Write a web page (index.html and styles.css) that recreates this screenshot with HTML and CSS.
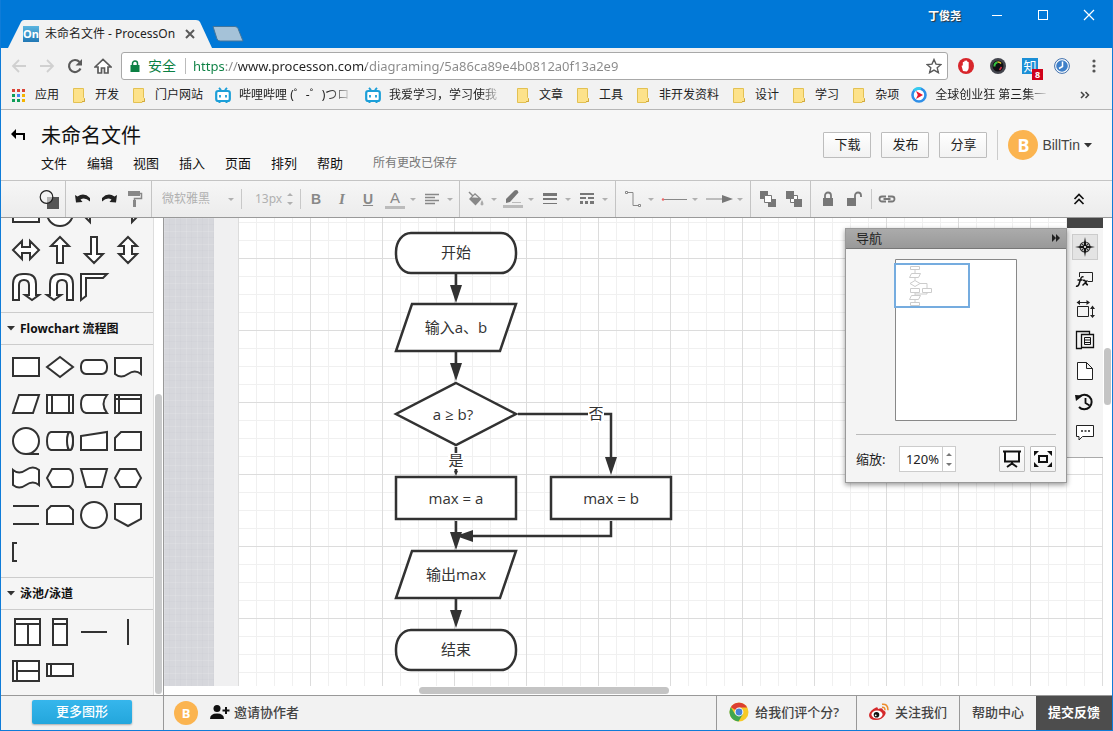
FILE: index.html
```html
<!DOCTYPE html>
<html lang="zh-CN">
<head>
<meta charset="utf-8">
<title>未命名文件 - ProcessOn</title>
<link rel="stylesheet" href="styles.css">
</head>
<body>
<svg class="defs" aria-hidden="true">
  <symbol id="folder" viewBox="0 0 16 16"><path d="M2.500 1.500h10v9l1 1v3h-1.500l-1 1h-8.500z" fill="#fde28a" stroke="#e3c152"/><path d="M13.500 11.500v3h-2.500" fill="none" stroke="#d0a93c"/></symbol>
  <symbol id="bili" viewBox="0 0 16 16"><rect x="1.200" y="4" width="13.600" height="10" rx="2" fill="#fff" stroke="#1c9fd8" stroke-width="2.200"/><path d="M4 0.800l2 2.400M12 0.800l-2 2.400M5 8v2.600M11 8v2.600M3.500 15.500h2M10.500 15.500h2" stroke="#1c9fd8" stroke-width="1.800"/></symbol>
  <symbol id="caret" viewBox="0 0 8 8"><path d="M1 3h6l-3 3z" fill="#b0b0b0"/></symbol>
</svg>

<header class="titlebar">
  <div class="tab">
    <svg class="tab-shape" viewBox="0 0 204 28" preserveAspectRatio="none"><path d="M0 28 L13 2 Q14 0 16 0 H188 Q191 0 192 2 L204 28z" fill="#f2f2f2"/></svg>
    <span class="favicon">On</span>
    <span class="tab-title">未命名文件 - ProcessOn</span>
    <button class="plain tab-close" aria-label="关闭标签页"><svg width="10" height="10" viewBox="0 0 10 10"><path d="M1 1l8 8M9 1l-8 8" stroke="#5a5a5a" stroke-width="2"/></svg></button>
  </div>
  <button class="plain new-tab" aria-label="新标签页"><svg width="34" height="18" viewBox="0 0 34 18"><path d="M2 1.500h22q2 0 3 2l5 12.500h-23q-2 0-3-2z" fill="#a5c2d8" stroke="#42759c"/></svg></button>
  <span class="spacer"></span>
  <span class="profile">丁俊尧</span>
  <button class="plain win" aria-label="最小化"><svg width="12" height="12" viewBox="0 0 12 12"><path d="M1 6.500h10" stroke="#fff"/></svg></button>
  <button class="plain win" aria-label="最大化"><svg width="12" height="12" viewBox="0 0 12 12"><rect x="1.500" y="1.500" width="9" height="9" fill="none" stroke="#fff"/></svg></button>
  <button class="plain win" aria-label="关闭"><svg width="12" height="12" viewBox="0 0 12 12"><path d="M1 1l10 10M11 1l-10 10" stroke="#fff" stroke-width="1.200"/></svg></button>
</header>

<div class="navrow">
  <button class="plain nav" aria-label="后退"><svg width="16" height="16" viewBox="0 0 16 16"><path d="M15 8H2M8 2L2 8l6 6" fill="none" stroke="#d0d0d0" stroke-width="1.800"/></svg></button>
  <button class="plain nav" aria-label="前进"><svg width="16" height="16" viewBox="0 0 16 16"><path d="M1 8h13M8 2l6 6-6 6" fill="none" stroke="#d0d0d0" stroke-width="1.800"/></svg></button>
  <button class="plain nav" aria-label="重新加载"><svg width="16" height="16" viewBox="0 0 16 16"><path d="M13.500 10.500a6 6 0 1 1-1-6.500" fill="none" stroke="#5a5a5a" stroke-width="2.200"/><path d="M15 1v6.500H8.500z" fill="#5a5a5a"/></svg></button>
  <button class="plain nav" aria-label="主页"><svg width="18" height="16" viewBox="0 0 18 16"><path d="M1 9L9 1.500 17 9h-3v6h-3.500v-5h-3v5H4V9z" fill="#fff" stroke="#5a5a5a" stroke-width="1.700"/></svg></button>
  <div class="omnibox">
    <svg width="10" height="12" viewBox="0 0 10 12"><rect x="0.500" y="5" width="9" height="7" fill="#0b8043"/><path d="M2.500 5V3.500a2.500 2.500 0 0 1 5 0V5" fill="none" stroke="#0b8043" stroke-width="1.500"/></svg>
    <span class="secure">安全</span>
    <input class="url" type="text" aria-label="地址" value="https://www.processon.com/diagraming/5a86ca89e4b0812a0f13a2e9">
    <button class="plain" aria-label="收藏"><svg width="16" height="16" viewBox="0 0 16 16"><path d="M8 1.500l2 4.600 5 .4-3.800 3.300 1.200 4.900L8 12.100l-4.400 2.600 1.200-4.900L1 6.500l5-.4z" fill="none" stroke="#5a5a5a" stroke-width="1.400"/></svg></button>
  </div>
  <button class="plain ext" aria-label="广告拦截"><svg width="16" height="16" viewBox="0 0 16 16"><circle cx="8" cy="8" r="8" fill="#d8262b"/><path d="M5 13L3.600 8q0-1 1.200-.4V4.200q1-.8 1.500 0V3q.9-.9 1.500 0v-.2q.9-.7 1.500.2v1q1-.5 1.400.3V10q-.3 2.600-2 3.600z" fill="#fff"/></svg></button>
  <button class="plain ext" aria-label="相机"><svg width="16" height="16" viewBox="0 0 16 16"><circle cx="8" cy="8" r="8" fill="#43454d"/><circle cx="8" cy="8" r="5.500" fill="#101014"/><path d="M4.500 8.500a4 4 0 0 1 3-4.300" fill="none" stroke="#35c440" stroke-width="2"/><path d="M7.500 4a4 4 0 0 1 3.500 1.500" fill="none" stroke="#d8c030" stroke-width="1.600"/><path d="M11.500 9l-2 3" stroke="#d42a45" stroke-width="1.500"/></svg></button>
  <button class="plain ext" aria-label="知乎"><span class="zhi">知</span><span class="count">8</span></button>
  <button class="plain ext" aria-label="历史"><svg width="16" height="16" viewBox="0 0 16 16"><circle cx="8" cy="8" r="7.400" fill="#fff" stroke="#3c6dab"/><circle cx="8" cy="8" r="5.800" fill="#3f80c9"/><path d="M8.500 3.500v5l-3.500 2" fill="none" stroke="#fff" stroke-width="1.500"/></svg></button>
  <button class="plain ext" aria-label="菜单"><svg width="4" height="14" viewBox="0 0 4 14"><circle cx="2" cy="2" r="1.600" fill="#555"/><circle cx="2" cy="7" r="1.600" fill="#555"/><circle cx="2" cy="12" r="1.600" fill="#555"/></svg></button>
</div>

<nav class="bookmarks">
  <a href="#"><svg width="16" height="16" viewBox="0 0 16 16"><path d="M1 2h3v3H1zM6 2h3v3H6zM11 2h3v3h-3z" fill="#db4437"/><path d="M1 7h3v3H1z" fill="#0f9d58"/><path d="M6 7h3v3H6z" fill="#4285f4"/><path d="M11 7h3v3h-3zM11 12h3v3h-3z" fill="#f4b400"/><path d="M1 12h3v3H1zM6 12h3v3H6z" fill="#0f9d58"/></svg>应用</a>
  <a href="#"><svg width="16" height="16"><use href="#folder"/></svg>开发</a>
  <a href="#"><svg width="16" height="16"><use href="#folder"/></svg>门户网站</a>
  <a href="#"><svg width="16" height="16"><use href="#bili"/></svg><span class="fade">哔哩哔哩 (゜-゜)つロ</span></a>
  <a href="#"><svg width="16" height="16"><use href="#bili"/></svg><span class="fade">我爱学习，学习使我</span></a>
  <a href="#"><svg width="16" height="16"><use href="#folder"/></svg>文章</a>
  <a href="#"><svg width="16" height="16"><use href="#folder"/></svg>工具</a>
  <a href="#"><svg width="16" height="16"><use href="#folder"/></svg>非开发资料</a>
  <a href="#"><svg width="16" height="16"><use href="#folder"/></svg>设计</a>
  <a href="#"><svg width="16" height="16"><use href="#folder"/></svg>学习</a>
  <a href="#"><svg width="16" height="16"><use href="#folder"/></svg>杂项</a>
  <a href="#"><svg width="16" height="16" viewBox="0 0 16 16"><circle cx="8" cy="8" r="6.500" fill="#fff" stroke="#2f8fe8" stroke-width="2.600"/><path d="M3 3.500a6.500 6.500 0 0 1 7-1.700" fill="none" stroke="#35cdf0" stroke-width="2.600"/><path d="M5 4l7 4-7 4 1.800-4z" fill="#e8162c"/></svg><span class="fade">全球创业狂 第三集一</span></a>
  <span class="spacer"></span>
  <button class="plain more" aria-label="更多书签"><svg width="10" height="8" viewBox="0 0 10 8"><path d="M1 1l3 3-3 3M5.500 1l3 3-3 3" fill="none" stroke="#444" stroke-width="1.500"/></svg></button>
</nav>

<div class="apphead">
  <button class="plain back" aria-label="返回"><svg width="16" height="12" viewBox="0 0 16 12"><path d="M1 5l5-5v4h9v7h-2V6H6v4z" fill="#000"/></svg></button>
  <div class="head-main">
    <h1>未命名文件</h1>
    <div class="menus">
      <button class="plain">文件</button><button class="plain">编辑</button><button class="plain">视图</button><button class="plain">插入</button><button class="plain">页面</button><button class="plain">排列</button><button class="plain">帮助</button>
      <span class="saved">所有更改已保存</span>
    </div>
  </div>
  <div class="actions">
    <button class="btn">下载</button><button class="btn">发布</button><button class="btn">分享</button>
    <span class="rule"></span>
    <button class="plain user"><span class="avatar">B</span>BillTin<svg width="8" height="5" viewBox="0 0 8 5"><path d="M0 0h8L4 4.500z" fill="#333"/></svg></button>
  </div>
</div>

<div class="toolbar" role="toolbar">
  <div class="group shapes"><button class="plain tool" aria-label="图形"><svg width="20" height="20" viewBox="0 0 20 20"><path d="M8 8h12v12H8z" fill="#555"/><circle cx="7.500" cy="8" r="6.300" fill="#f4f4f4" fill-opacity=".6" stroke="#222" stroke-width="1.200"/></svg></button></div>
  <div class="group">
    <button class="plain tool" aria-label="撤销"><svg width="16" height="14" viewBox="0 0 16 14"><path d="M0 3l2.500 1.500Q9 0 15 6v3.500Q10 5 5.500 7.500L7.500 10 1 10.500z" fill="#222"/></svg></button>
    <button class="plain tool" aria-label="恢复"><svg width="16" height="14" viewBox="0 0 16 14"><path d="M16 3l-2.500 1.500Q7 0 1 6v3.500Q6 5 10.500 7.500L8.500 10l6.500.5z" fill="#222"/></svg></button>
    <button class="plain tool" aria-label="格式刷"><svg width="16" height="16" viewBox="0 0 16 16"><path d="M1 0h12v5H1z" fill="#888"/><path d="M13 2.500h1.500v5H7.500V16" fill="none" stroke="#888" stroke-width="1.500"/><path d="M6 9h3v7H6z" fill="#888"/></svg></button>
  </div>
  <div class="group text-group">
    <label class="font-pick"><select aria-label="字体"><option>微软雅黑</option></select><svg width="8" height="8"><use href="#caret"/></svg></label>
    <span class="short"></span>
    <label class="size-pick"><input type="text" value="13px" aria-label="字号"><svg width="8" height="14" viewBox="0 0 8 14"><path d="M1 4h6L4 1zM1 10h6l-3 3z" fill="#b0b0b0"/></svg></label>
    <span class="short"></span>
    <button class="plain tool"><b>B</b></button>
    <button class="plain tool"><i>I</i></button>
    <button class="plain tool"><u>U</u></button>
    <button class="plain tool drop"><span class="ink">A</span><svg width="8" height="8"><use href="#caret"/></svg></button>
    <button class="plain tool drop" aria-label="对齐"><svg class="ic" width="16" height="12" viewBox="0 0 16 12"><path d="M1 1.500h14M1 4.500h10M1 7.500h14M1 10.500h10" stroke="#888" stroke-width="1.300"/></svg><svg width="8" height="8"><use href="#caret"/></svg></button>
  </div>
  <div class="group style-group">
    <button class="plain tool drop" aria-label="填充"><svg class="ic" width="18" height="16" viewBox="0 0 18 16"><path d="M2 8l6-6 6.500 6-6 6.500z" fill="#888"/><path d="M2 1l7 7" stroke="#888" stroke-width="1.500"/><path d="M5 6.500l3-2.800 3.500 3z" fill="#eee"/><path d="M15 9q3 5 0 5.500-3-.5 0-5.500" fill="#aaa"/></svg><svg width="8" height="8"><use href="#caret"/></svg></button>
    <button class="plain tool drop" aria-label="线条颜色"><svg class="ic" width="20" height="20" viewBox="0 0 20 20"><path d="M3 14v-4L11.500 1.500q3-1.500 4 2L7 13z" fill="#777"/><path d="M9 13.500h9" stroke="#bbb"/><path d="M0 16h20v3H0z" fill="#bbb"/></svg><svg width="8" height="8"><use href="#caret"/></svg></button>
    <button class="plain tool drop" aria-label="线条宽度"><svg class="ic" width="14" height="12" viewBox="0 0 14 12"><path d="M0 0h14v3H0zM0 5h14v2H0zM0 10h14v1H0z" fill="#777"/></svg><svg width="8" height="8"><use href="#caret"/></svg></button>
    <button class="plain tool drop" aria-label="线条样式"><svg class="ic" width="14" height="12" viewBox="0 0 14 12"><path d="M0 0h14v2H0zM0 4h6v2H0zM8 4h6v2H8zM0 8h3v3H0zM5 8h3v3H5zM10 8h4v3h-4z" fill="#777"/></svg><svg width="8" height="8"><use href="#caret"/></svg></button>
  </div>
  <div class="group link-group">
    <button class="plain tool drop" aria-label="连线类型"><svg class="ic" width="16" height="16" viewBox="0 0 16 16"><path d="M2 1.500h6v13h6" fill="none" stroke="#888"/><path d="M.5.500h2v2h-2zM13.500 13.500h2v2h-2z" fill="#fff" stroke="#888"/></svg><svg width="8" height="8"><use href="#caret"/></svg></button>
    <button class="plain tool drop wide" aria-label="起点"><svg class="ic" width="28" height="6" viewBox="0 0 28 6"><path d="M3 3.500h24" stroke="#888"/><circle cx="3" cy="3.500" r="1.200" fill="#e66"/></svg><svg width="8" height="8"><use href="#caret"/></svg></button>
    <button class="plain tool drop wide" aria-label="终点"><svg class="ic" width="28" height="8" viewBox="0 0 28 8"><path d="M1 4h20" stroke="#888"/><path d="M17 0l11 4-11 4z" fill="#777"/></svg><svg width="8" height="8"><use href="#caret"/></svg></button>
  </div>
  <div class="group">
    <button class="plain tool" aria-label="置于顶层"><svg width="16" height="16" viewBox="0 0 16 16"><path d="M0 0h8v8H0zM8 8h8v8H8z" fill="#777"/><path d="M4.500 4.500h7v7h-7z" fill="#fff" stroke="#777"/></svg></button>
    <button class="plain tool" aria-label="置于底层"><svg width="16" height="16" viewBox="0 0 16 16"><path d="M4.500 4.500h7v7h-7z" fill="#fff" stroke="#777"/><path d="M0 0h8v8H0zM8 8h8v8H8z" fill="#777"/></svg></button>
  </div>
  <div class="group last">
    <button class="plain tool" aria-label="锁定"><svg width="12" height="16" viewBox="0 0 12 16"><path d="M1 7h10v8H1z" fill="#777"/><path d="M3 7V4.500a3 3 0 0 1 6 0V7" fill="none" stroke="#777" stroke-width="1.800"/></svg></button>
    <button class="plain tool" aria-label="解锁"><svg width="16" height="16" viewBox="0 0 16 16"><path d="M1 7h9v8H1z" fill="#777"/><path d="M9 7V4.500a3 3 0 0 1 6 0V6" fill="none" stroke="#777" stroke-width="1.800"/></svg></button>
    <span class="short"></span>
    <button class="plain tool" aria-label="链接"><svg width="18" height="8" viewBox="0 0 18 8"><path d="M8 1.500H4a2.500 2.500 0 0 0 0 5h4M10 1.500h4a2.500 2.500 0 0 1 0 5h-4M5.500 4h7" fill="none" stroke="#777" stroke-width="1.800"/></svg></button>
  </div>
  <span class="spacer"></span>
  <button class="plain collapse" aria-label="收起"><svg width="12" height="12" viewBox="0 0 12 12"><path d="M1.500 6L6 1.500 10.500 6M1.500 11L6 6.500 10.500 11" fill="none" stroke="#111" stroke-width="1.700"/></svg></button>
</div>

<main class="workspace">
  <aside class="palette">
    <div class="palette-list">
      <div class="grid">
        <svg viewBox="-17 -18 34 37"><path d="M-13-10h26v19h-26z"/></svg>
        <svg viewBox="-17 -18 34 37"><circle r="13"/></svg>
        <svg viewBox="-17 -18 34 37"><path d="M-13 0l9-9v5h17v8H-4v5z"/></svg>
        <svg viewBox="-17 -18 34 37"><path d="M13 0L4-9v5h-17v8H4v5z"/></svg>
        <svg viewBox="-17 -18 34 37"><path d="M-13 0l9-9v6h8v-6l9 9-9 9V3h-8v6z"/></svg>
        <svg viewBox="-17 -18 34 37"><path d="M0-13l9 9H3v17h-6V-4h-6z"/></svg>
        <svg viewBox="-17 -18 34 37"><path d="M0 13l-9-9h6v-17h6V4h6z"/></svg>
        <svg viewBox="-17 -18 34 37"><path d="M0-13l9 9H4v8h5l-9 9-9-9h5v-8h-5z"/></svg>
        <svg viewBox="-17 -18 34 37"><path d="M-13 13V-3Q-13-13-3-13H0Q10-13 10-3V8h3l-7 5-7-5h4v-10q0-5-5-5t-5 5v15z"/></svg>
        <svg viewBox="-17 -18 34 37"><path d="M13 13V-3Q13-13 3-13H0Q-10-13-10-3V8h-3l7 5 7-5h-4v-10q0-5 5-5t5 5v15z"/></svg>
        <svg viewBox="-17 -18 34 37"><path d="M-13 13v-26h26l-4 4H-8V9z"/></svg>
      </div>
      <h2><svg width="8" height="5" viewBox="0 0 8 5"><path d="M0 0h8L4 4.500z" fill="#333"/></svg>Flowchart 流程图</h2>
      <div class="grid">
        <svg viewBox="-17 -18 34 37"><path d="M-13-9h26v18h-26z"/></svg>
        <svg viewBox="-17 -18 34 37"><path d="M0-10l13 10L0 10-13 0z"/></svg>
        <svg viewBox="-17 -18 34 37"><rect x="-13" y="-7" width="26" height="14" rx="5" ry="6"/></svg>
        <svg viewBox="-17 -18 34 37"><path d="M-13-9h26V7Q7 2 0 7T-13 7z"/></svg>
        <svg viewBox="-17 -18 34 37"><path d="M-7-9h20L7 9h-20z"/></svg>
        <svg viewBox="-17 -18 34 37"><path d="M-13-9h26v18h-26zM-8-9V9M9-9V9"/></svg>
        <svg viewBox="-17 -18 34 37"><path d="M-8-9h21q-7 9 0 18H-8q-5-1-5-9t5-9z"/></svg>
        <svg viewBox="-17 -18 34 37"><path d="M-13-9h26v18h-26zM-9-9V9M-13-5h26"/></svg>
        <svg viewBox="-17 -18 34 37"><circle r="13"/><path d="M0 13h13"/></svg>
        <svg viewBox="-17 -18 34 37"><path d="M-9-9h19q3 1 3 9t-3 9H-9q-4-1-4-9t4-9z"/><ellipse cx="10" rx="3" ry="9"/></svg>
        <svg viewBox="-17 -18 34 37"><path d="M-13-5l26-4V9h-26z"/></svg>
        <svg viewBox="-17 -18 34 37"><path d="M-7-9h20V9h-26v-12z"/></svg>
        <svg viewBox="-17 -18 34 37"><path d="M-13-8q6 5 13 0t13 0V7Q7 2 0 7T-13 7z"/></svg>
        <svg viewBox="-17 -18 34 37"><path d="M-8-9H9q4 1 4 9T9 9H-8l-5-9z"/></svg>
        <svg viewBox="-17 -18 34 37"><path d="M-13-9h26L8 9H-8z"/></svg>
        <svg viewBox="-17 -18 34 37"><path d="M-8-9H8l5 9-5 9H-8l-5-9z"/></svg>
        <svg viewBox="-17 -18 34 37"><path d="M-13-9h26M-13 9h26"/></svg>
        <svg viewBox="-17 -18 34 37"><path d="M-9-9H9l4 4V9h-26V-5z"/></svg>
        <svg viewBox="-17 -18 34 37"><circle r="13"/></svg>
        <svg viewBox="-17 -18 34 37"><path d="M-13-11h26V4L0 11-13 4z"/></svg>
        <svg viewBox="-17 -18 34 37"><path d="M-9-9h-4V9h4" fill="none"/></svg>
      </div>
      <h2><svg width="8" height="5" viewBox="0 0 8 5"><path d="M0 0h8L4 4.500z" fill="#333"/></svg>泳池/泳道</h2>
      <div class="grid">
        <svg viewBox="-17 -18 34 37"><path d="M-11-13h25v26h-25zM-11-8h25M2-8v21"/></svg>
        <svg viewBox="-17 -18 34 37"><path d="M-7-13H7v26H-7zM-7-8H7"/></svg>
        <svg viewBox="-17 -18 34 37"><path d="M-13 0h26"/></svg>
        <svg viewBox="-17 -18 34 37"><path d="M0-13v26"/></svg>
        <svg viewBox="-17 -18 34 37"><path d="M-13-8h26v20h-26zM-9-8v20M-9 2h22"/></svg>
        <svg viewBox="-17 -18 34 37"><path d="M-13-5h26v12h-26zM-9-5v12"/></svg>
      </div>
    </div>
    <div class="palette-scroll"><span></span></div>
  </aside>

  <section class="canvas">
    <div class="cloth"></div>
    <div class="margin"></div>
    <div class="sheet">
      <svg class="chart" width="864" height="468" viewBox="238 218 864 468">
        <g class="node">
          <rect x="396" y="233" width="120" height="40" rx="15" ry="19"/>
          <path d="M412 304h104l-16 47H396z"/>
          <path d="M456 383l60 31-60 31-60-31z"/>
          <rect x="396" y="477" width="120" height="42"/>
          <rect x="551" y="477" width="120" height="42"/>
          <path d="M412 551h104l-16 47H396z"/>
          <rect x="396" y="630" width="120" height="40" rx="15" ry="19"/>
        </g>
        <path class="wire" d="M456 274v14M456 352v14M518 414h93v46M456 447v24M456 521v14M456 599v14M611 521v15H470"/>
        <path class="tip" d="M450 285h12l-6 18zM450 363h12l-6 18zM605 457h12l-6 18zM454 471h4l-2 5zM450 532h12l-6 18zM450 610h12l-6 18zM473 530v12l-17-6z"/>
        <path class="knock" d="M448 453h16v16h-16zM588 406h16v16h-16z"/>
        <g class="caption">
          <text x="456" y="258">开始</text>
          <text x="456" y="333">输入a、b</text>
          <text x="453" y="420">a ≥ b?</text>
          <text x="456" y="466">是</text>
          <text x="596" y="419">否</text>
          <text x="456" y="504">max = a</text>
          <text x="611" y="504">max = b</text>
          <text x="456" y="580">输出max</text>
          <text x="456" y="655">结束</text>
        </g>
      </svg>
    </div>
    <span class="vthumb"></span>
    <span class="hthumb"></span>

    <div class="dock">
      <button class="plain active" aria-label="导航"><svg width="20" height="20" viewBox="0 0 20 20"><circle cx="10" cy="10" r="5" fill="none" stroke="#333" stroke-width="1.200"/><path d="M10 0l1.500 8.500L20 10l-8.500 1.500L10 20l-1.500-8.500L0 10l8.500-1.500z" fill="#111"/><path d="M6 6l8 8M14 6l-8 8" stroke="#333"/><circle cx="10" cy="10" r="1" fill="#fff"/></svg></button>
      <button class="plain" aria-label="图形"><svg width="20" height="20" viewBox="0 0 20 20"><path d="M4.500 9V4.500h13v9H13" fill="none" stroke="#222"/><path d="M1 18q2.500 1 3.500-3.500l1.200-3.500Q6.500 8 8.500 9M2.500 12h5M8 12.500q2-1 2.500 1.500t2.500 3M12.500 12.500l-5 5" fill="none" stroke="#111" stroke-width="1.500"/></svg></button>
      <button class="plain" aria-label="度量"><svg width="20" height="20" viewBox="0 0 20 20"><path d="M2.500 7.500h11v10h-11zM2 3.500h12M17.500 8v10" fill="none" stroke="#222"/><path d="M5 1v5L1.500 3.500zM11.500 1v5L15 3.500zM15 10h5l-2.500-3.500zM15 16h5l-2.500 3z" fill="#222"/></svg></button>
      <button class="plain" aria-label="页面"><svg width="20" height="20" viewBox="0 0 20 20"><path d="M7 18.500H1.500v-17h13V4" fill="none" stroke="#111" stroke-width="1.300"/><path d="M6.500 4.500h12v13h-12z" fill="none" stroke="#111" stroke-width="1.300"/><path d="M9.500 7.500h6v7h-6zM10 10h5M10 12.500h5" fill="none" stroke="#111"/></svg></button>
      <button class="plain" aria-label="文档"><svg width="20" height="20" viewBox="0 0 20 20"><path d="M2.500 1.500h9l6 6v11h-15zM11.500 1.500v6h6" fill="#fff" stroke="#222"/></svg></button>
      <button class="plain" aria-label="历史"><svg width="20" height="20" viewBox="0 0 20 20"><path d="M4 5a7.300 7.300 0 1 1 0 10" fill="none" stroke="#111" stroke-width="2"/><path d="M0 3l8 .5L1 9z" fill="#111"/><path d="M10.500 6v5l4 2.500" fill="none" stroke="#111" stroke-width="1.800"/></svg></button>
      <button class="plain" aria-label="评论"><svg width="20" height="20" viewBox="0 0 20 20"><path d="M1.500 2.500h17v11h-11L4 17v-3.500H1.500z" fill="#fff" stroke="#222"/><path d="M6 8h2M9.500 8h2M13 8h2" stroke="#222" stroke-width="1.300"/></svg></button>
    </div>

    <div class="navigator">
      <div class="navigator-head">导航<button class="plain" aria-label="收起"><svg width="8" height="8" viewBox="0 0 8 8"><path d="M0 0l4 4-4 4zM4 0l4 4-4 4z" fill="#222"/></svg></button></div>
      <div class="navigator-body">
        <svg class="mini" width="122" height="162" viewBox="1 0 122 162">
          <path d="M1.500.500h121v161H1.500z" fill="#fff" stroke="#888"/>
          <path d="M16.500 7.500h9v3h-9zM17.500 14.500h9l-2 4h-9zM21 21.500l5 3-5 3-5-3zM16.500 29.500h9v4h-9zM28.500 29.500h9v4h-9zM17.500 36.500h9l-2 4h-9zM16.500 43.500h9v3h-9zM21 10v4M21 18v3M26 24.500h7v5M21 33v3M21 40v3M33 33v2H21" fill="none" stroke="#ccc"/>
          <path d="M1 5h74v43H1z" fill="none" stroke="#75acdf" stroke-width="2"/>
        </svg>
        <div class="zoomrow">
          <label for="zoom">缩放:</label>
          <span class="zoom"><input id="zoom" type="text" value="120%"><svg width="12" height="25" viewBox="0 0 12 25"><path d="M3 9h6L6 6zM3 16h6l-3 3z" fill="#777"/></svg></span>
          <span class="spacer"></span>
          <button class="btn square" aria-label="演示"><svg width="20" height="18" viewBox="0 0 20 18"><path d="M1 1.500h18M3 2v9.500h14V2" fill="none" stroke="#111" stroke-width="2"/><path d="M10 12v3M5 17l5-3.500 5 3.500" fill="none" stroke="#111" stroke-width="2"/></svg></button>
          <button class="btn square" aria-label="适应屏幕"><svg width="20" height="16" viewBox="0 0 20 16"><path d="M6 5h8v6H6z" fill="none" stroke="#111" stroke-width="2"/><path d="M1 0h5L1 5zM19 0h-5l5 5zM1 16h5l-5-5zM19 16h-5l5-5z" fill="#111"/></svg></button>
        </div>
      </div>
    </div>
  </section>
</main>

<footer class="bottombar">
  <div class="more-shapes"><button>更多图形</button></div>
  <span class="avatar small">B</span>
  <button class="plain invite"><svg width="20" height="14" viewBox="0 0 20 14"><circle cx="7" cy="3.500" r="3.500" fill="#111"/><path d="M0 14q0-5.500 7-5.500T14 14z" fill="#111"/><path d="M16 2v7M12.500 5.500h7" stroke="#111" stroke-width="2"/></svg>邀请协作者</button>
  <span class="spacer"></span>
  <a class="rate" href="#"><svg width="20" height="20" viewBox="0 0 20 20"><circle cx="10" cy="10" r="9.500" fill="#f6c927"/><path d="M10 10L1.800 5.200A9.500 9.500 0 0 1 18.200 5.500H10z" fill="#dc3e33"/><path d="M1.800 5.200A9.500 9.500 0 0 0 9.500 19.500L14 12 10 10 6 12z" fill="#3fa650"/><circle cx="10" cy="10" r="4.400" fill="#fff"/><circle cx="10" cy="10" r="3.400" fill="#4683d8"/></svg>给我们评个分?</a>
  <a href="#"><svg width="20" height="18" viewBox="0 0 20 18"><path d="M7 4.500q2-1 2 1.500 5-2 5 1 4 1.500 2 5-3 5-9 5-7 0-7-5Q1 7 7 4.500z" fill="#d52a2c"/><ellipse cx="8" cy="11.500" rx="5.500" ry="4" fill="#fff"/><circle cx="7.500" cy="11.700" r="2.800" fill="#111"/><circle cx="6.700" cy="12.300" r=".9" fill="#fff"/><path d="M13 1.200q6-.7 6 6M13 4.200q3-.3 3 3" fill="none" stroke="#ee8d2c" stroke-width="1.500"/></svg>关注我们</a>
  <a href="#">帮助中心</a>
  <button class="feedback">提交反馈</button>
</footer>
</body>
</html>
```

FILE: styles.css
```css
* { box-sizing: border-box; }

body {
  margin: 0;
  height: 100vh;
  display: flex;
  flex-direction: column;
  overflow: hidden;
  border: 1px solid #0f7cd8;
  border-top: 0;
  background: #f5f5f5;
  color: #222;
  font: 12px/16px "Noto Sans", "Noto Sans CJK SC", sans-serif;
}

body > * { flex-shrink: 0; }
svg { display: block; flex-shrink: 0; }
.defs { position: absolute; width: 0; height: 0; }
.spacer { flex: 1; }

button, input, select { font: inherit; color: inherit; }
a { color: inherit; text-decoration: none; }

.plain {
  display: flex;
  align-items: center;
  justify-content: center;
  padding: 0;
  border: 0;
  background: none;
}

/* Browser frame */
.titlebar {
  display: flex;
  align-items: flex-start;
  height: 48px;
  padding: 0 0 0 7px;
  background: #0078d7;
}

.tab {
  position: relative;
  display: flex;
  align-items: center;
  gap: 6px;
  width: 204px;
  height: 28px;
  margin-top: 20px;
  padding: 0 17px 0 15px;
}
.tab > * { position: relative; }
.tab .tab-shape { position: absolute; inset: 0; width: 100%; height: 100%; }
.favicon {
  width: 16px;
  height: 16px;
  background: linear-gradient(#5bb5e0, #2178b5);
  color: #fff;
  font-size: 11px;
  font-weight: 700;
  line-height: 16px;
  text-align: center;
}
.tab-title { flex: 1; white-space: nowrap; }
.new-tab { margin: 25px 0 0 -1px; }
.profile {
  margin: 8px 13px 0 0;
  color: #fff;
  font-size: 11px;
  font-weight: 700;
  text-shadow: 1px 1px 1px #333;
}
.win { width: 46px; height: 30px; }

.navrow {
  display: flex;
  align-items: center;
  height: 36px;
  padding: 0 2px 0 4px;
  background: #f2f2f2;
}
.nav { width: 28px; height: 28px; }
.omnibox {
  display: flex;
  align-items: center;
  flex: 1;
  height: 28px;
  margin: 0 2px 0 4px;
  padding: 0 5px 0 8px;
  border: 1px solid #a8a8a8;
  border-radius: 3px;
  background: #fff;
}
.secure {
  margin: 0 7px 0 8px;
  padding-right: 9px;
  border-right: 1px solid #bbb;
  color: #0b8043;
  font-size: 14px;
}
.omnibox .url {
  flex: 1;
  min-width: 0;
  padding: 0;
  border: 0;
  outline: 0;
  font-size: 13px;
  color: transparent;
  background: linear-gradient(90deg, #0b8043 32px, #888 32px 45px, #222 45px 173px, #888 173px);
  -webkit-background-clip: text;
  background-clip: text;
}
.ext { position: relative; width: 32px; height: 28px; }
.zhi {
  width: 16px;
  height: 16px;
  background: #1b8fd6;
  color: #fff;
  font-size: 13px;
  line-height: 16px;
  text-align: center;
}
.count {
  position: absolute;
  right: 3px;
  bottom: 0;
  width: 11px;
  height: 11px;
  background: #d0021b;
  color: #fff;
  font-size: 9px;
  font-weight: 700;
  line-height: 11px;
}

.bookmarks {
  display: flex;
  align-items: center;
  gap: 12px;
  height: 26px;
  padding: 0 22px 4px 10px;
  border-bottom: 1px solid #b6b6b6;
  background: #f2f2f2;
  white-space: nowrap;
}
.bookmarks a { display: flex; align-items: center; gap: 8px; }
.fade {
  width: 114px;
  -webkit-mask-image: linear-gradient(90deg, #000 80%, transparent);
  mask-image: linear-gradient(90deg, #000 80%, transparent);
}

/* Document header */
.apphead {
  display: flex;
  align-items: flex-start;
  height: 70px;
  padding: 12px 20px 0 9px;
  background: #f7f7f7;
}
.back { margin: 7px 15px 0 0; }
.head-main { flex: 1; }
h1 { margin: 0; color: #111; font-size: 20px; font-weight: 400; line-height: 28px; }
.menus { display: flex; align-items: center; gap: 20px; margin-top: 3px; color: #111; font-size: 13px; line-height: 20px; }
.saved { margin-left: 10px; color: #777; font-size: 12px; }

.actions { display: flex; align-items: center; gap: 10px; margin-top: 8px; }
.btn {
  display: flex;
  align-items: center;
  justify-content: center;
  width: 48px;
  height: 26px;
  padding: 0 0 2px;
  border: 1px solid #bdbdbd;
  border-radius: 1px;
  background: linear-gradient(#fff, #f2f2f2);
  font-size: 13px;
}
.rule { width: 1px; height: 30px; background: #ccc; }
.user { gap: 4px; color: #444; font: 14px "Liberation Sans", sans-serif; }
.avatar {
  width: 30px;
  height: 30px;
  border-radius: 50%;
  background: #fbb450;
  color: #fff;
  font: 700 18px/30px "Noto Sans", sans-serif;
  text-align: center;
}
.avatar.small { width: 24px; height: 24px; font-size: 13px; line-height: 24px; }

/* Toolbar */
.toolbar {
  display: flex;
  align-items: stretch;
  height: 38px;
  border-top: 1px solid #c4c4c4;
  border-bottom: 1px solid #999;
  background: linear-gradient(#f6f6f6, #ececec);
  color: #888;
}
.group { display: flex; align-items: center; padding: 0 3px 0 4px; border-right: 1px solid #c4c4c4; }
.shapes { padding-left: 35px; }
.text-group { padding: 0 4px 0 0; }
.style-group { padding: 0 5px 0 2px; }
.link-group { padding: 0 4px 0 3px; }
.group.last { border: 0; }
.tool { width: 26px; height: 28px; font: 700 14px "Liberation Sans", sans-serif; }
.tool i { font-family: "Liberation Serif", serif; font-size: 15px; }
.drop { display: grid; grid-template-columns: 28px 8px; width: 37px; justify-items: center; justify-content: start; }
.wide { grid-template-columns: 36px 6px; width: 45px; }
.ink { width: 20px; border-bottom: 3px solid #bbb; font-weight: 400; font-size: 15px; line-height: 17px; }
.short { width: 1px; height: 20px; background: #c8c8c8; }
.short + .tool { margin-left: 2px; }
.group.last .short { margin-left: 4px; }
.font-pick, .size-pick { display: flex; align-items: center; color: #b0b0b0; }
.font-pick { width: 89px; padding: 0 6px 0 10px; }
.font-pick select { flex: 1; min-width: 0; padding: 0; border: 0; background: none; appearance: none; }
.size-pick { width: 58px; padding: 0 6px 0 13px; }
.size-pick input { flex: 1; width: 0; padding: 0; border: 0; background: none; }
.collapse { width: 28px; margin-right: 19px; }

/* Workspace */
.workspace { flex: 1; display: flex; min-height: 0; }

.palette { display: flex; width: 163px; border-right: 1px solid #999; background: #fff; }
.palette-list {
  flex: 1;
  display: flex;
  flex-direction: column;
  justify-content: flex-end;
  overflow: hidden;
  padding-bottom: 1px;
  border-right: 1px solid #ddd;
  background: #f5f5f5;
}
.palette-list > * { flex-shrink: 0; }
.grid { display: grid; grid-template-columns: repeat(4, 34px); grid-auto-rows: 37px; padding: 4px 0 6px 8px; }
.grid svg { width: 34px; height: 37px; overflow: visible; fill: #fff; stroke: #323232; stroke-width: 2; }
.palette h2 {
  display: flex;
  align-items: center;
  gap: 5px;
  height: 33px;
  margin: 0;
  padding-left: 6px;
  border-top: 1px solid #ccc;
  border-bottom: 1px solid #ccc;
  color: #111;
  font-size: 12px;
  font-weight: 700;
}
.palette-scroll { display: flex; align-items: flex-end; width: 9px; padding: 0 1px 1px; }
.palette-scroll span { width: 7px; height: 63%; border-radius: 4px; background: #c9cacb; }

.canvas { position: relative; flex: 1; display: flex; min-width: 0; padding: 0 9px 9px 0; overflow: hidden; background: #fff; }
.cloth {
  width: 50px;
  background:
    repeating-linear-gradient(90deg, rgba(255, 255, 255, .12) 0 1px, transparent 1px 5px, rgba(120, 120, 140, .03) 5px 6px, transparent 6px 11px),
    repeating-linear-gradient(rgba(255, 255, 255, .12) 0 1px, transparent 1px 6px, rgba(120, 120, 140, .03) 6px 7px, transparent 7px 13px),
    #d6d7dc;
}
.margin { width: 24px; background: #f0f0f1; }
.sheet {
  flex: 1;
  min-width: 0;
  overflow: hidden;
  border-right: 1px solid #ddd;
  background-color: #fff;
  background-image:
    linear-gradient(90deg, #dcdcdc 1px, transparent 1px),
    linear-gradient(#dcdcdc 1px, transparent 1px),
    linear-gradient(90deg, #f0f0f0 1px, transparent 1px),
    linear-gradient(#f0f0f0 1px, transparent 1px);
  background-size: 72px 72px, 72px 72px, 18px 18px, 18px 18px;
  background-position: 0 40px, 0 40px, 0 4px, 0 4px;
}
.node { fill: #fff; stroke: #323232; stroke-width: 2.5; }
.wire { fill: none; stroke: #323232; stroke-width: 2.5; }
.tip { fill: #323232; }
.knock { fill: #fff; }
.caption { fill: #333; font-family: "Open Sans", "Noto Sans CJK SC", sans-serif; font-size: 15px; text-anchor: middle; }

.vthumb, .hthumb { position: absolute; border-radius: 4px; background: #c4c4c4; }
.vthumb { right: 1px; top: 130px; width: 7px; height: 57px; }
.hthumb { left: 255px; bottom: 1px; width: 250px; height: 7px; }

.dock {
  position: absolute;
  top: 0;
  right: 9px;
  display: flex;
  flex-direction: column;
  align-items: center;
  gap: 5px;
  width: 36px;
  padding: 6px 0 11px;
  border-top: 10px solid #444;
  border-bottom: 1px solid #aaa;
  background: #f4f4f4;
}
.dock button { width: 26px; height: 26px; }
.dock .active { border: 1px solid #ccc; background: #e4e4e4; }

.navigator {
  position: absolute;
  top: 10px;
  right: 45px;
  width: 222px;
  border: 1px solid #999;
  background: #f4f4f4;
  box-shadow: 0 2px 5px rgba(0, 0, 0, .4);
}
.navigator-head {
  display: flex;
  align-items: center;
  justify-content: space-between;
  height: 20px;
  padding: 0 6px 2px 10px;
  border-bottom: 1px solid #777;
  background: linear-gradient(#ababab, #999);
  font-size: 13px;
}
.navigator-body { padding: 10px 10px 10px; }
.mini { margin: 0 auto; overflow: visible; }
.zoomrow { display: flex; align-items: center; gap: 5px; margin-top: 13px; padding-top: 11px; border-top: 1px solid #bbb; font-size: 13px; }
.zoomrow label { width: 38px; }
.zoom { display: flex; width: 57px; height: 26px; border: 1px solid #ccc; background: #fff; }
.zoom input { flex: 1; width: 0; padding: 0 3px 0 0; border: 0; border-right: 1px solid #ccc; background: none; text-align: right; }
.btn.square { width: 26px; height: 26px; padding: 0; }

/* Bottom bar */
.bottombar {
  display: flex;
  align-items: center;
  height: 35px;
  padding: 0;
  border-top: 1px solid #999;
  background: #f2f2f2;
  color: #444;
  font-size: 13px;
  font-weight: 500;
}
.more-shapes { display: flex; justify-content: center; align-items: center; align-self: stretch; width: 163px; margin-right: 10px; padding-bottom: 2px; border-right: 1px solid #999; }
.more-shapes button {
  width: 100px;
  height: 24px;
  padding: 0 0 2px;
  border: 0;
  border-radius: 2px;
  background: linear-gradient(#36b6ec, #23a6dc);
  box-shadow: 0 1px 2px rgba(0, 0, 0, .3);
  color: #fff;
}
.invite { gap: 4px; margin-left: 12px; padding-bottom: 2px; }
.bottombar a { display: flex; align-items: center; gap: 6px; align-self: stretch; padding: 0 12px 2px; border-left: 1px solid #999; }
.bottombar .rate { padding-right: 17px; }
.feedback { align-self: stretch; padding: 0 12px 2px; border: 0; background: #4d4d4d; color: #fff; font-weight: 700; }
```
